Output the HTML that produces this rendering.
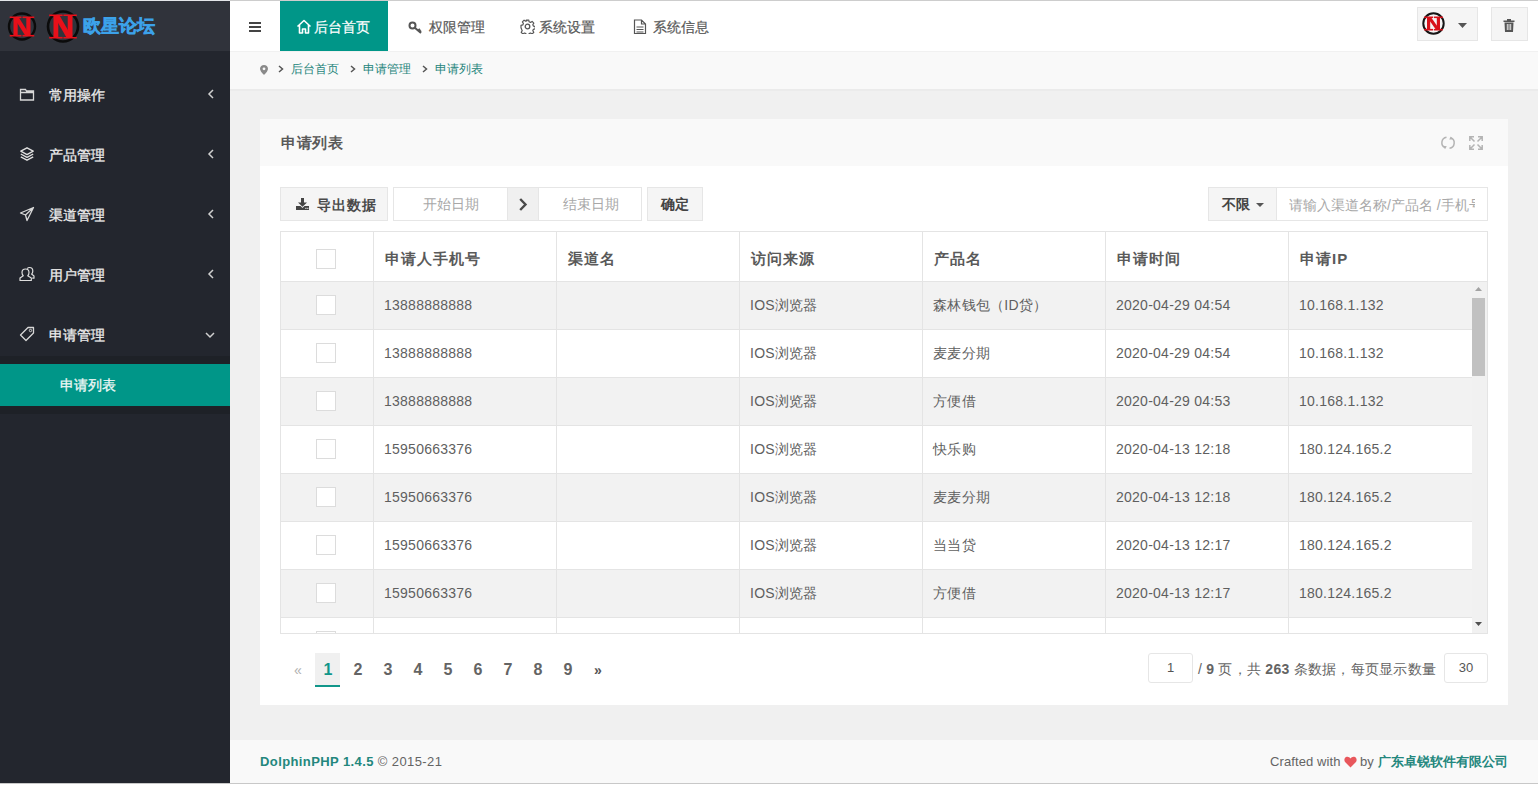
<!DOCTYPE html>
<html><head><meta charset="utf-8">
<style>
*{box-sizing:border-box;margin:0;padding:0}
html,body{width:1538px;height:787px;overflow:hidden;background:#fff}
body{font-family:"Liberation Sans",sans-serif;font-size:14px;color:#646464;position:relative}
.a{position:absolute;white-space:nowrap}
#topline{left:0;top:0;width:1538px;height:1px;background:linear-gradient(to right,#e4e6ea 0,#e4e6ea 230px,#cdcdcd 230px)}
#side{left:0;top:1px;width:230px;height:782px;background:#23262e}
#logo{left:0;top:1px;width:230px;height:50px;background:#30333b}
#header{left:230px;top:1px;width:1308px;height:50px;background:#fff}
#crumb{left:230px;top:51px;width:1308px;height:38px;background:#f9f9f9}
#content{left:230px;top:89px;width:1308px;height:651px;background:#f0f0f0}
#footer{left:230px;top:740px;width:1308px;height:43px;background:#f9f9f9}
#bottomline{left:0;top:783px;width:1538px;height:1px;background:#c8c8c8}
#block{left:260px;top:119px;width:1248px;height:586px;background:#fff}
#blockhead{left:260px;top:119px;width:1248px;height:47px;background:#f9f9f9}
.mi{left:49px;margin-top:1px;color:#ececec;font-size:14px;line-height:20px;-webkit-text-stroke:0.3px #ececec}
.mico{left:19px;width:16px;height:16px}
.chev{left:207px;width:8px;height:10px}
.green{background:#009688}
.nav{color:#5a5a5a;font-size:14px;line-height:20px;top:17px;-webkit-text-stroke:0.2px currentColor}
.crumbt{color:#26857c;font-size:12px;line-height:16px;top:61px}
.sep{top:64px;width:6px;height:10px}
.btn{background:#f5f5f5;border:1px solid #e6e6e6}
.inp{background:#fff;border:1px solid #e6e6e6}
.tr{position:absolute;left:0;width:1191px;height:48px;border-bottom:1px solid #e4e4e4}
.cb{position:absolute;left:35px;width:20px;height:20px;background:#fff;border:1px solid #dcdcdc}
.vl{position:absolute;top:0;width:1px;height:48px;background:#e4e4e4}
.td{position:absolute;top:0;line-height:47px;font-size:14px;color:#5f5f5f;letter-spacing:0.25px}
.th{font-size:15px;letter-spacing:1px;font-weight:bold;color:#5a5a5a;line-height:22px;top:248px}
.pg{top:659px;font-size:16px;line-height:22px;color:#646464;font-weight:bold;width:30px;text-align:center}

</style></head><body>
<div id="topline" class="a"></div>
<div id="side" class="a"></div>
<div id="logo" class="a"></div>
<div id="header" class="a"></div>
<div id="crumb" class="a"></div>
<div id="content" class="a"></div>
<div id="footer" class="a"></div>
<div id="bottomline" class="a"></div>
<div class="a" style="left:230px;top:51px;width:1308px;height:1px;background:#f1f1f1"></div>
<div class="a" style="left:230px;top:89px;width:1308px;height:2px;background:#ebebeb"></div>
<div id="block" class="a"></div>
<div id="blockhead" class="a"></div>

<!-- logo -->
<svg class="a" style="left:7px;top:11px" width="31" height="31" viewBox="0 0 31 31"><circle cx="15" cy="15.5" r="13" fill="none" stroke="#0b0b0b" stroke-width="2.4"/><path d="M6.5 6h4.2v19h-4.2z" fill="#e8101a"/><path d="M19.3 6h4.2v19h-4.2z" fill="#e8101a"/><path d="M6.5 6h5.04L23.5 25h-5.04z" fill="#e8101a"/><path d="M2.7199999999999998 5.5h11.760000000000002v1.6h-11.760000000000002z" fill="#e8101a"/><path d="M15.52 5.5h11.760000000000002v1.6h-11.760000000000002z" fill="#e8101a"/><path d="M2.7199999999999998 23.9h11.760000000000002v1.6h-11.760000000000002z" fill="#e8101a"/><path d="M15.52 23.9h11.760000000000002v1.6h-11.760000000000002z" fill="#e8101a"/></svg>
<svg class="a" style="left:46px;top:9px" width="35" height="35" viewBox="0 0 35 35"><circle cx="17" cy="17.5" r="15" fill="none" stroke="#0b0b0b" stroke-width="2.6"/><path d="M7.5 6h4.8v23h-4.8z" fill="#e8101a"/><path d="M21.7 6h4.8v23h-4.8z" fill="#e8101a"/><path d="M7.5 6h5.76L26.5 29h-5.76z" fill="#e8101a"/><path d="M3.1799999999999997 5.5h13.440000000000001v1.6h-13.440000000000001z" fill="#e8101a"/><path d="M17.38 5.5h13.440000000000001v1.6h-13.440000000000001z" fill="#e8101a"/><path d="M3.1799999999999997 27.9h13.440000000000001v1.6h-13.440000000000001z" fill="#e8101a"/><path d="M17.38 27.9h13.440000000000001v1.6h-13.440000000000001z" fill="#e8101a"/></svg>
<div class="a" style="left:83px;top:13px;font-size:18px;line-height:26px;color:#3ca2ea;letter-spacing:0px;-webkit-text-stroke:1.3px #3ca2ea">欧星论坛</div>

<!-- sidebar menu -->
<svg class="a mico" style="top:86px" viewBox="0 0 16 16"><path d="M1.5 3.5h5l1 1.5h7v9h-13z M1.5 6.5h13" fill="none" stroke="#d8d8d8" stroke-width="1.3"/></svg>
<div class="a mi" style="top:84px">常用操作</div>
<svg class="a chev" style="top:89px" viewBox="0 0 8 10"><path d="M6 1L2 5l4 4" fill="none" stroke="#d0d0d0" stroke-width="1.5"/></svg>

<svg class="a mico" style="top:146px" viewBox="0 0 16 16"><path d="M8 1.8l6.2 3.4L8 8.6 1.8 5.2z M1.8 8l6.2 3.4L14.2 8 M1.8 10.8l6.2 3.4 6.2-3.4" fill="none" stroke="#e0e0e0" stroke-width="1.4" stroke-linejoin="round"/></svg>
<div class="a mi" style="top:144px">产品管理</div>
<svg class="a chev" style="top:149px" viewBox="0 0 8 10"><path d="M6 1L2 5l4 4" fill="none" stroke="#d0d0d0" stroke-width="1.5"/></svg>

<svg class="a mico" style="top:206px" viewBox="0 0 16 16"><path d="M14.5 1.5L1.5 7l5 2 1.5 5.5z M6.5 9l8-7.5" fill="none" stroke="#d8d8d8" stroke-width="1.3" stroke-linejoin="round"/></svg>
<div class="a mi" style="top:204px">渠道管理</div>
<svg class="a chev" style="top:209px" viewBox="0 0 8 10"><path d="M6 1L2 5l4 4" fill="none" stroke="#d0d0d0" stroke-width="1.5"/></svg>

<svg class="a mico" style="top:266px" viewBox="0 0 16 16"><path d="M4.3 9.8C3.4 8.9 3 7.8 3 6.5 3 4.3 4.5 3 6.5 3S10 4.3 10 6.5c0 1.3-.4 2.4-1.3 3.3L12.3 12v2.5H1v-2.5z" fill="none" stroke="#dedede" stroke-width="1.2" stroke-linejoin="round"/><path d="M8.2 2.6C8.7 2 9.5 1.5 10.5 1.5c1.9 0 3.3 1.4 3.3 3.5 0 1.2-.4 2.3-1.2 3.1l2.4 1.8v2.3h-1.8" fill="none" stroke="#dedede" stroke-width="1.2" stroke-linejoin="round"/></svg>
<div class="a mi" style="top:264px">用户管理</div>
<svg class="a chev" style="top:269px" viewBox="0 0 8 10"><path d="M6 1L2 5l4 4" fill="none" stroke="#d0d0d0" stroke-width="1.5"/></svg>

<svg class="a mico" style="top:326px" viewBox="0 0 16 16"><path d="M9 1.5h5.5V7L7 14.5 1.5 9z" fill="none" stroke="#d8d8d8" stroke-width="1.3" stroke-linejoin="round"/><circle cx="11.5" cy="4.5" r="1.2" fill="none" stroke="#d8d8d8" stroke-width="1"/></svg>
<div class="a mi" style="top:324px">申请管理</div>
<svg class="a" style="left:205px;top:331px" width="10" height="8" viewBox="0 0 10 8"><path d="M1 2l4 4 4-4" fill="none" stroke="#d0d0d0" stroke-width="1.5"/></svg>

<div class="a" style="left:0;top:356px;width:230px;height:58px;background:#1e2127"></div>
<div class="a green" style="left:0;top:364px;width:230px;height:42px"></div>
<div class="a" style="left:60px;top:375px;font-size:14px;line-height:20px;color:#eef8f6;-webkit-text-stroke:0.3px #eef8f6">申请列表</div>

<!-- header nav -->
<div class="a" style="left:249px;top:22px;width:12px;height:2px;background:#444"></div>
<div class="a" style="left:249px;top:26px;width:12px;height:2px;background:#444"></div>
<div class="a" style="left:249px;top:30px;width:12px;height:2px;background:#444"></div>
<div class="a green" style="left:280px;top:1px;width:108px;height:50px"></div>
<svg class="a" style="left:296px;top:19px" width="16" height="15" viewBox="0 0 16 15"><path d="M1.5 7.5L8 1.5l6.5 6 M3.5 6v8h3v-4h3v4h3V6" fill="none" stroke="#fff" stroke-width="1.6" stroke-linejoin="round"/></svg>
<div class="a nav" style="left:314px;color:#fff">后台首页</div>
<svg class="a" style="left:408px;top:21px" width="15" height="13" viewBox="0 0 15 13"><circle cx="4.5" cy="4.5" r="3" fill="none" stroke="#555" stroke-width="2"/><path d="M6.5 6.5L13 12 M10 9.5l2-1.5 M11.5 11l1.5-1.5" fill="none" stroke="#555" stroke-width="2"/></svg>
<div class="a nav" style="left:429px">权限管理</div>
<svg class="a" style="left:520px;top:19px" width="15" height="15" viewBox="0 0 15 15"><circle cx="7.5" cy="7.5" r="2.3" fill="none" stroke="#555" stroke-width="1.3"/><path d="M6.3 1h2.4l.4 1.8 1.4.6 1.6-1 1.7 1.7-1 1.6.6 1.4 1.8.4v2.4l-1.8.4-.6 1.4 1 1.6-1.7 1.7-1.6-1-1.4.6-.4 1.8H6.3l-.4-1.8-1.4-.6-1.6 1-1.7-1.7 1-1.6-.6-1.4L1 8.7V6.3l1.8-.4.6-1.4-1-1.6 1.7-1.7 1.6 1 1.4-.6z" fill="none" stroke="#555" stroke-width="1.2" stroke-linejoin="round"/></svg>
<div class="a nav" style="left:539px">系统设置</div>
<svg class="a" style="left:633px;top:19px" width="14" height="15" viewBox="0 0 14 15"><path d="M1.5 1h7l4 4v9.5h-11z M8.5 1v4h4 M3.5 8h7 M3.5 10.5h7 M3.5 13h7" fill="none" stroke="#555" stroke-width="1.2"/></svg>
<div class="a nav" style="left:653px">系统信息</div>

<!-- header right -->
<div class="a btn" style="left:1417px;top:7px;width:61px;height:34px"></div>
<svg class="a" style="left:1422px;top:12px" width="23" height="23" viewBox="0 0 23 23"><circle cx="11.5" cy="11.5" r="10.2" fill="none" stroke="#151515" stroke-width="2"/><path d="M5 5h3.2v13h-3.2z" fill="#d8121b"/><path d="M14.8 5h3.2v13h-3.2z" fill="#d8121b"/><path d="M5 5h3.84L18 18h-3.84z" fill="#d8121b"/><path d="M2.1199999999999997 4.5h8.96v1.6h-8.96z" fill="#d8121b"/><path d="M11.92 4.5h8.96v1.6h-8.96z" fill="#d8121b"/><path d="M2.1199999999999997 16.9h8.96v1.6h-8.96z" fill="#d8121b"/><path d="M11.92 16.9h8.96v1.6h-8.96z" fill="#d8121b"/></svg>
<svg class="a" style="left:1458px;top:23px" width="9" height="5" viewBox="0 0 9 5"><path d="M0 0h9L4.5 5z" fill="#555"/></svg>
<div class="a btn" style="left:1491px;top:7px;width:37px;height:34px"></div>
<svg class="a" style="left:1503px;top:19px" width="12" height="13" viewBox="0 0 12 13"><path d="M0.5 1.5h11v1.6H0.5z M4 0h4v1.5H4z M1.5 3.5h9l-0.5 9.5H2z" fill="#555"/><path d="M4.3 5v6 M6 5v6 M7.7 5v6" stroke="#f5f5f5" stroke-width="0.9"/></svg>

<!-- breadcrumb -->
<svg class="a" style="left:260px;top:65px" width="8" height="10" viewBox="0 0 8 10"><path d="M4 0C1.8 0 0 1.7 0 3.8 0 6.5 4 10 4 10s4-3.5 4-6.2C8 1.7 6.2 0 4 0z" fill="#8a8a8a"/><circle cx="4" cy="3.8" r="1.4" fill="#f9f9f9"/></svg>
<svg class="a sep" style="left:278px" viewBox="0 0 6 10"><path d="M1 2l3.5 3L1 8" fill="none" stroke="#555" stroke-width="1.5"/></svg>
<div class="a crumbt" style="left:291px">后台首页</div>
<svg class="a sep" style="left:350px" viewBox="0 0 6 10"><path d="M1 2l3.5 3L1 8" fill="none" stroke="#555" stroke-width="1.5"/></svg>
<div class="a crumbt" style="left:363px">申请管理</div>
<svg class="a sep" style="left:422px" viewBox="0 0 6 10"><path d="M1 2l3.5 3L1 8" fill="none" stroke="#555" stroke-width="1.5"/></svg>
<div class="a crumbt" style="left:435px">申请列表</div>

<!-- block header -->
<div class="a" style="left:281px;top:132px;font-size:15px;letter-spacing:0.6px;line-height:22px;font-weight:bold;color:#5a5a5a">申请列表</div>
<svg class="a" style="left:1440px;top:135px" width="16" height="16" viewBox="0 0 16 16"><path d="M6.5 2.2A5.5 5.5 0 0 0 5 12.6 M9.5 13.2A5.5 5.5 0 0 0 10.6 2.6" fill="none" stroke="#b4b4b4" stroke-width="1.5"/><path d="M3.2 10.8l3.6 0.4-1.8 3z M12.8 4.6l-3.6-.2 1.6-3z" fill="#b4b4b4"/></svg>
<svg class="a" style="left:1468px;top:135px" width="16" height="16" viewBox="0 0 16 16"><path d="M1.8 6V1.8H6 M10 1.8h4.2V6 M14.2 10v4.2H10 M6 14.2H1.8V10 M2 2l4.5 4.5 M14 2l-4.5 4.5 M14 14l-4.5-4.5 M2 14l4.5-4.5" fill="none" stroke="#b4b4b4" stroke-width="1.5"/></svg>

<!-- toolbar -->
<div class="a btn" style="left:280px;top:187px;width:108px;height:34px"></div>
<svg class="a" style="left:296px;top:198px" width="13" height="12" viewBox="0 0 13 12"><path d="M5 0h3v4.5h3L6.5 8.8 2 4.5h3z" fill="#444"/><path d="M0 8h4.5l2 2 2-2H13v4H0z" fill="#444"/><rect x="9.3" y="9.8" width="1.2" height="1.1" fill="#eee"/><rect x="11.2" y="9.8" width="1.2" height="1.1" fill="#eee"/></svg>
<div class="a" style="left:317px;top:195px;font-size:14px;letter-spacing:1px;line-height:20px;font-weight:bold;color:#4a4a4a">导出数据</div>
<div class="a inp" style="left:393px;top:187px;width:249px;height:34px"></div>
<div class="a" style="left:507px;top:188px;width:32px;height:32px;background:#f0f0f0;border-left:1px solid #e6e6e6;border-right:1px solid #e6e6e6"></div>
<svg class="a" style="left:518px;top:197px" width="10" height="15" viewBox="0 0 10 15"><path d="M2.2 2l5.3 5.5-5.3 5.5" fill="none" stroke="#4a4a4a" stroke-width="2.4"/></svg>
<div class="a" style="left:423px;top:194px;font-size:14px;line-height:20px;color:#a8a8a8">开始日期</div>
<div class="a" style="left:563px;top:194px;font-size:14px;line-height:20px;color:#a8a8a8">结束日期</div>
<div class="a btn" style="left:647px;top:187px;width:56px;height:34px"></div>
<div class="a" style="left:661px;top:194px;font-size:14px;line-height:20px;font-weight:bold;color:#444">确定</div>

<div class="a btn" style="left:1208px;top:187px;width:69px;height:34px"></div>
<div class="a" style="left:1222px;top:194px;font-size:14px;line-height:20px;font-weight:bold;color:#444">不限</div>
<svg class="a" style="left:1256px;top:203px" width="8" height="4" viewBox="0 0 8 4"><path d="M0 0h8L4 4z" fill="#555"/></svg>
<div class="a inp" style="left:1276px;top:187px;width:212px;height:34px;overflow:hidden"><div style="position:absolute;left:12px;top:0;width:186px;height:32px;overflow:hidden"><div style="position:absolute;left:0;top:7px;font-size:14px;line-height:20px;color:#a8a8a8;white-space:nowrap">请输入渠道名称/产品名 /手机号</div></div></div>

<!-- table -->
<div class="a" style="left:280px;top:231px;width:1208px;height:403px;border:1px solid #e4e4e4;background:#fff"></div>
<div class="a" style="left:281px;top:281px;width:1206px;height:1px;background:#e4e4e4"></div>
<div class="a" style="left:373px;top:232px;width:1px;height:49px;background:#e4e4e4"></div>
<div class="a" style="left:556px;top:232px;width:1px;height:49px;background:#e4e4e4"></div>
<div class="a" style="left:739px;top:232px;width:1px;height:49px;background:#e4e4e4"></div>
<div class="a" style="left:922px;top:232px;width:1px;height:49px;background:#e4e4e4"></div>
<div class="a" style="left:1105px;top:232px;width:1px;height:49px;background:#e4e4e4"></div>
<div class="a" style="left:1288px;top:232px;width:1px;height:49px;background:#e4e4e4"></div>
<div class="a" style="left:316px;top:249px;width:20px;height:20px;background:#fff;border:1px solid #dcdcdc"></div>
<div class="a th" style="left:385px">申请人手机号</div>
<div class="a th" style="left:568px">渠道名</div>
<div class="a th" style="left:751px">访问来源</div>
<div class="a th" style="left:934px">产品名</div>
<div class="a th" style="left:1117px">申请时间</div>
<div class="a th" style="left:1300px">申请IP</div>
<div class="a" style="left:281px;top:282px;width:1191px;height:351px;overflow:hidden">
<div class="tr" style="top:0px;background:#f2f2f2">
<div class="cb" style="top:13px"></div>
<div class="vl" style="left:92px"></div>
<div class="td" style="left:103px">13888888888</div>
<div class="vl" style="left:275px"></div>
<div class="vl" style="left:458px"></div>
<div class="td" style="left:469px">IOS浏览器</div>
<div class="vl" style="left:641px"></div>
<div class="td" style="left:652px">森林钱包（ID贷）</div>
<div class="vl" style="left:824px"></div>
<div class="td" style="left:835px">2020-04-29 04:54</div>
<div class="vl" style="left:1007px"></div>
<div class="td" style="left:1018px">10.168.1.132</div>
</div>
<div class="tr" style="top:48px;background:#fff">
<div class="cb" style="top:13px"></div>
<div class="vl" style="left:92px"></div>
<div class="td" style="left:103px">13888888888</div>
<div class="vl" style="left:275px"></div>
<div class="vl" style="left:458px"></div>
<div class="td" style="left:469px">IOS浏览器</div>
<div class="vl" style="left:641px"></div>
<div class="td" style="left:652px">麦麦分期</div>
<div class="vl" style="left:824px"></div>
<div class="td" style="left:835px">2020-04-29 04:54</div>
<div class="vl" style="left:1007px"></div>
<div class="td" style="left:1018px">10.168.1.132</div>
</div>
<div class="tr" style="top:96px;background:#f2f2f2">
<div class="cb" style="top:13px"></div>
<div class="vl" style="left:92px"></div>
<div class="td" style="left:103px">13888888888</div>
<div class="vl" style="left:275px"></div>
<div class="vl" style="left:458px"></div>
<div class="td" style="left:469px">IOS浏览器</div>
<div class="vl" style="left:641px"></div>
<div class="td" style="left:652px">方便借</div>
<div class="vl" style="left:824px"></div>
<div class="td" style="left:835px">2020-04-29 04:53</div>
<div class="vl" style="left:1007px"></div>
<div class="td" style="left:1018px">10.168.1.132</div>
</div>
<div class="tr" style="top:144px;background:#fff">
<div class="cb" style="top:13px"></div>
<div class="vl" style="left:92px"></div>
<div class="td" style="left:103px">15950663376</div>
<div class="vl" style="left:275px"></div>
<div class="vl" style="left:458px"></div>
<div class="td" style="left:469px">IOS浏览器</div>
<div class="vl" style="left:641px"></div>
<div class="td" style="left:652px">快乐购</div>
<div class="vl" style="left:824px"></div>
<div class="td" style="left:835px">2020-04-13 12:18</div>
<div class="vl" style="left:1007px"></div>
<div class="td" style="left:1018px">180.124.165.2</div>
</div>
<div class="tr" style="top:192px;background:#f2f2f2">
<div class="cb" style="top:13px"></div>
<div class="vl" style="left:92px"></div>
<div class="td" style="left:103px">15950663376</div>
<div class="vl" style="left:275px"></div>
<div class="vl" style="left:458px"></div>
<div class="td" style="left:469px">IOS浏览器</div>
<div class="vl" style="left:641px"></div>
<div class="td" style="left:652px">麦麦分期</div>
<div class="vl" style="left:824px"></div>
<div class="td" style="left:835px">2020-04-13 12:18</div>
<div class="vl" style="left:1007px"></div>
<div class="td" style="left:1018px">180.124.165.2</div>
</div>
<div class="tr" style="top:240px;background:#fff">
<div class="cb" style="top:13px"></div>
<div class="vl" style="left:92px"></div>
<div class="td" style="left:103px">15950663376</div>
<div class="vl" style="left:275px"></div>
<div class="vl" style="left:458px"></div>
<div class="td" style="left:469px">IOS浏览器</div>
<div class="vl" style="left:641px"></div>
<div class="td" style="left:652px">当当贷</div>
<div class="vl" style="left:824px"></div>
<div class="td" style="left:835px">2020-04-13 12:17</div>
<div class="vl" style="left:1007px"></div>
<div class="td" style="left:1018px">180.124.165.2</div>
</div>
<div class="tr" style="top:288px;background:#f2f2f2">
<div class="cb" style="top:13px"></div>
<div class="vl" style="left:92px"></div>
<div class="td" style="left:103px">15950663376</div>
<div class="vl" style="left:275px"></div>
<div class="vl" style="left:458px"></div>
<div class="td" style="left:469px">IOS浏览器</div>
<div class="vl" style="left:641px"></div>
<div class="td" style="left:652px">方便借</div>
<div class="vl" style="left:824px"></div>
<div class="td" style="left:835px">2020-04-13 12:17</div>
<div class="vl" style="left:1007px"></div>
<div class="td" style="left:1018px">180.124.165.2</div>
</div>
<div class="tr" style="top:336px;background:#fff">
<div class="cb" style="top:13px"></div>
<div class="vl" style="left:92px"></div>
<div class="vl" style="left:275px"></div>
<div class="vl" style="left:458px"></div>
<div class="vl" style="left:641px"></div>
<div class="vl" style="left:824px"></div>
<div class="vl" style="left:1007px"></div>
</div>
</div>
<div class="a" style="left:1472px;top:282px;width:15px;height:351px;background:#f1f1f1"></div>
<div class="a" style="left:1472px;top:298px;width:13px;height:78px;background:#c1c1c1"></div>
<svg class="a" style="left:1475px;top:287px" width="7" height="4" viewBox="0 0 7 4"><path d="M0 4h7L3.5 0z" fill="#a3a3a3"/></svg>
<svg class="a" style="left:1475px;top:622px" width="7" height="4" viewBox="0 0 7 4"><path d="M0 0h7L3.5 4z" fill="#505050"/></svg>

<!-- pagination -->
<div class="a" style="left:288px;top:659px;width:20px;font-size:14px;line-height:22px;color:#b0b0b0;text-align:center">«</div>
<div class="a" style="left:315px;top:653px;width:25px;height:34px;background:#f0f0f0;border-bottom:2px solid #11968a"></div>
<div class="a pg" style="left:313px;color:#11968a">1</div>
<div class="a pg" style="left:343px">2</div>
<div class="a pg" style="left:373px">3</div>
<div class="a pg" style="left:403px">4</div>
<div class="a pg" style="left:433px">5</div>
<div class="a pg" style="left:463px">6</div>
<div class="a pg" style="left:493px">7</div>
<div class="a pg" style="left:523px">8</div>
<div class="a pg" style="left:553px">9</div>
<div class="a" style="left:588px;top:659px;width:20px;font-size:14px;line-height:22px;color:#555;text-align:center;font-weight:bold">»</div>

<div class="a inp" style="left:1148px;top:653px;width:45px;height:30px;border-radius:3px"></div>
<div class="a" style="left:1148px;top:658px;width:45px;text-align:center;font-size:13px;line-height:20px;color:#555">1</div>
<div class="a" style="left:1198px;top:658px;font-size:14px;line-height:22px;color:#646464;letter-spacing:0.25px">/ <b>9</b> 页，共 <b>263</b> 条数据，每页显示数量</div>
<div class="a inp" style="left:1444px;top:653px;width:44px;height:30px;border-radius:3px"></div>
<div class="a" style="left:1444px;top:658px;width:44px;text-align:center;font-size:13px;line-height:20px;color:#555">30</div>

<!-- footer -->
<div class="a" style="left:260px;top:753px;font-size:13px;line-height:18px;color:#646464;letter-spacing:0.4px"><b style="color:#23877d">DolphinPHP 1.4.5</b> © 2015-21</div>
<div class="a" style="left:1270px;top:753px;font-size:13px;line-height:18px;color:#646464;letter-spacing:0.1px">Crafted with</div>
<svg class="a" style="left:1344px;top:756px" width="13" height="12" viewBox="0 0 13 12"><path d="M6.5 11.5L1.3 6.3C-.2 4.8.2 2 2 1.1 3.7.2 5.4 1 6.5 2.5 7.6 1 9.3.2 11 1.1c1.8.9 2.2 3.7.7 5.2z" fill="#e8575c"/></svg>
<div class="a" style="left:1360px;top:753px;font-size:13px;line-height:18px;color:#646464">by</div>
<div class="a" style="left:1378px;top:753px;font-size:13px;line-height:18px;font-weight:bold;color:#23877d">广东卓锐软件有限公司</div>

</body></html>
